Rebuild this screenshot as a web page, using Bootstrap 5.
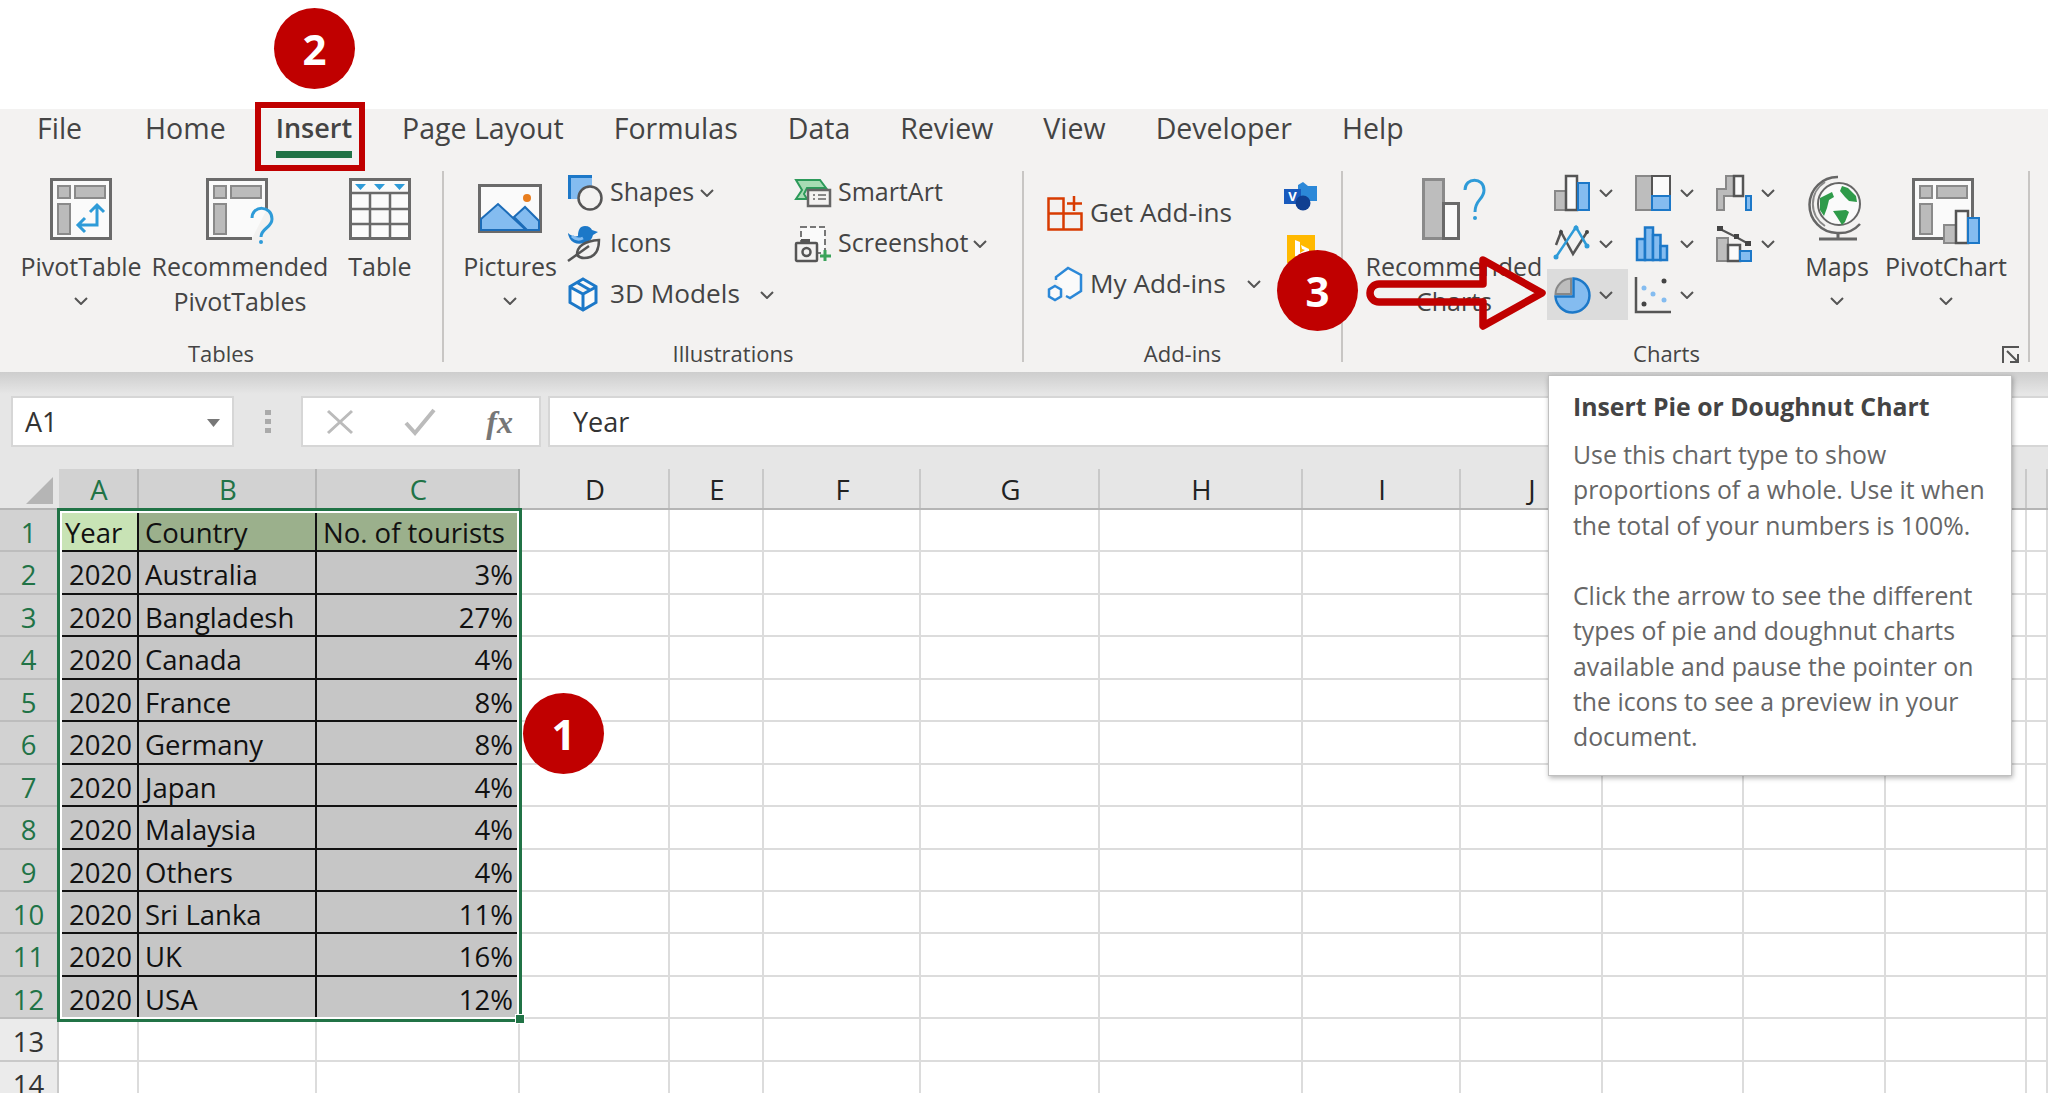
<!DOCTYPE html>
<html lang="en">
  <head>
    <meta charset="UTF-8" />
    <title>Insert Pie or Doughnut Chart</title>
    <link rel="stylesheet" href="https://cdn.jsdelivr.net/npm/bootstrap@5.3.0/dist/css/bootstrap.min.css" />
    <style>
      html, body { height: 100%; overflow: hidden; background: #fff; }
      body { font-family: "Open Sans", "Liberation Sans", sans-serif; color: #444; }
      svg { display: block; flex: none; overflow: visible; }
      .page-top { height: 109px; }

      /* ribbon */
      .ribbon { background: #f3f2f1; height: 263px; }
      .tab-row { height: 58px; padding-left: 37px; gap: 50px; font-size: 28.5px; }
      .tab-item { height: 49px; line-height: 38px; }
      .tab-item.first { margin-right: 13px; }
      .tab-on { font-size: 27px; font-weight: 600; border-bottom: 7px solid #217346; }
      .tool-row { height: 205px; font-size: 25px; line-height: 35px; }
      .txt-wide { font-size: 26.2px; }
      .rb-group { height: 205px; }
      .rb-body { flex: 1 1 auto; min-height: 0; }
      .rb-label { height: 34px; line-height: 31px; font-size: 22px; }
      .rb-sep { width: 2px; margin: 4px 0 10px; background: #c8c6c4; flex: none; }
      .big-btn { padding-top: 11px; }
      .big-icon { height: 62px; margin-bottom: 9px; }
      .chev-gap { margin-top: 13px; }
      .stack-row { height: 51px; }
      .stack-row span { padding-bottom: 2px; }
      .slot-icon { width: 43px; }
      .w-142 { width: 442px; }
      .w-illus { width: 578px; }
      .w-addin { width: 317px; }
      .w-chart { width: 685px; }
      .b-pivot { width: 138px; margin-left: 12px; }
      .b-recp { width: 178px; margin-left: 1px; }
      .b-table { width: 102px; }
      .b-pic { width: 110px; margin-left: 11px; margin-right: 2px; }
      .s-one { width: 228px; }
      .chev-shapes { margin-left: 6px; }
      .chev-models { margin-left: 20px; }
      .chev-shot { margin-left: 4px; }
      .addin-wrap { padding-left: 23px; padding-top: 10px; }
      .addin-left { width: 237px; }
      .addin-row { height: 71px; }
      .addin-icon { width: 43px; }
      .addin-right { padding-top: 5px; }
      .chev-addin { margin-left: 21px; }
      .b-recc { width: 186px; margin-left: 18px; }
      .chart-grid { width: 243px; display: grid; grid-template-columns: repeat(3, 81px); grid-auto-rows: 51px; }
      .chart-cell { padding-left: 7px; gap: 9px; }
      .chart-cell.on { background: #dcdcdc; }
      .b-maps { width: 94px; }
      .b-pchart { width: 124px; }
      .launch-gap { margin-right: 8px; }
      .label-pad { padding: 0 12px 3px 0; }

      /* formula bar */
      .fbar { height: 75px; padding-top: 24px; background: linear-gradient(#cdcdcd, #e6e6e6 22px); }
      .fbox { height: 51px; background: #fff; border: 2px solid #d6d6d6; }
      .f-name { width: 223px; margin-left: 11px; padding: 2px 12px 0; font-size: 27px; color: #333; }
      .f-dots { width: 67px; }
      .f-btns { width: 240px; padding: 0 26px 0 24px; }
      .f-x { font-family: "Liberation Serif", serif; font-style: italic; font-size: 32px; font-weight: 700; color: #777; line-height: 1; }
      .f-input { margin-left: 7px; padding: 2px 0 0 23px; font-size: 27px; color: #333; border-right: 0; }

      /* sheet */
      .sheet { display: grid; background: #fff; font-size: 27.5px;
        grid-template-columns: 59px 80px 178px 203px 150px 94px 157px 179px 203px 158px 142px 141px 142px 141px 21px;
        grid-template-rows: 63px repeat(14, 42.45px); }
      .corner { background: #e6e6e6; border-bottom: 2px solid #b5b5b5; }
      .corner svg { margin: 30px 0 0 26px; }
      .col-h { background: #e6e6e6; color: #222; line-height: 41px; padding-top: 22px;
        text-align: center; border-bottom: 2px solid #b5b5b5; position: relative; }
      .col-h::after { content: ""; position: absolute; right: 0; top: 22px; bottom: 0; width: 2px; background: #c9c9c9; }
      .col-h.sel { background: linear-gradient(#e6e6e6 22px, #d2d2d2 22px); color: #217346; }
      .col-h.sel::after { background: #b5b5b5; }
      .row-h { background: #ebebeb; color: #333; text-align: center; line-height: 45px; border-bottom: 2px solid #c9c9c9; border-right: 2px solid #c9c9c9; }
      .row-h.sel { background: #d2d2d2; color: #217346; border-color: #bdbdbd; }
      .cell-e { border-right: 2px solid #dcdcdc; border-bottom: 2px solid #dcdcdc; }
      .cell-d { background: #c6c6c6; color: #111; line-height: 45px; border-right: 2px solid #111; border-bottom: 2px solid #111; padding: 0 5px 0 6px; white-space: nowrap; overflow: hidden; }
      .cell-d.hd { background: #9bb08c; }
      .cell-d.hd1 { background: #c8e3b5; }
      .cell-d.num { text-align: right; }

      /* overlays */
      .sheet-wrap { position: relative; }
      .sel-box { position: absolute; left: 57px; top: 61px; width: 465px; height: 514px; border: 3px solid #217346; box-shadow: inset 0 0 0 2px #fff; }
      .sel-grip { position: absolute; left: 515px; top: 567px; width: 10px; height: 10px; background: #217346; border: 1px solid #fff; }
      .tip-box { position: absolute; left: 1548px; top: 375px; width: 464px; height: 401px; background: #fff; border: 1px solid #c0c0c0;
        box-shadow: 1px 2px 5px rgba(0, 0, 0, .3); padding: 13px 0 0 24px; white-space: nowrap; color: #666; font-size: 24.8px; line-height: 35.3px; }
      .tip-box h6 { font-size: 24.8px; font-weight: 700; color: #444; line-height: 35px; margin: 0 0 13px; }
      .step-dot { position: absolute; width: 81px; height: 81px; border-radius: 50%; background: #c00000; color: #fff; font-size: 42px; font-weight: 700;
        line-height: 81px; text-align: center; }
      .dot-2 { left: 274px; top: 8px; }
      .dot-3 { left: 1277px; top: 250px; }
      .dot-1 { left: 523px; top: 693px; }
      .red-box { position: absolute; left: 255px; top: 102px; width: 110px; height: 69px; border: 6px solid #c00000; }
      .red-arrow { position: absolute; left: 1360px; top: 250px; }
    </style>
  </head>
  <body>
    <svg width="0" height="0" class="position-absolute">
      <symbol id="chev" viewBox="0 0 14 8"><path d="M1 1l6 6 6-6" fill="none" stroke="#555" stroke-width="2" /></symbol>
    </svg>

    <div class="page-top"></div>

    <div class="ribbon">
      <div class="tab-row d-flex align-items-start text-nowrap">
        <div class="tab-item first">File</div>
        <div class="tab-item">Home</div>
        <div class="tab-item tab-on">Insert</div>
        <div class="tab-item">Page Layout</div>
        <div class="tab-item">Formulas</div>
        <div class="tab-item">Data</div>
        <div class="tab-item">Review</div>
        <div class="tab-item">View</div>
        <div class="tab-item">Developer</div>
        <div class="tab-item">Help</div>
      </div>

      <div class="tool-row d-flex text-nowrap">
        <!-- Tables -->
        <div class="rb-group w-142 d-flex flex-column">
          <div class="rb-body d-flex">
            <div class="big-btn b-pivot d-flex flex-column align-items-center">
              <div class="big-icon">
                <svg width="62" height="62" viewBox="0 0 62 62">
                  <rect x="1.5" y="1.5" width="59" height="59" fill="#fafafa" stroke="#6a6a6a" stroke-width="3" />
                  <rect x="8" y="8" width="12" height="12" fill="#bbb" stroke="#8a8a8a" stroke-width="2" />
                  <rect x="25" y="8" width="30" height="12" fill="#bbb" stroke="#8a8a8a" stroke-width="2" />
                  <rect x="8" y="26" width="12" height="30" fill="#bbb" stroke="#8a8a8a" stroke-width="2" />
                  <path d="M29 47h18V27M35 40l-7 7 7 7M40 34l7-7 7 7" fill="none" stroke="#2e9bd8" stroke-width="3" />
                </svg>
              </div>
              <div>PivotTable</div>
              <svg width="14" height="8" class="chev-gap"><use href="#chev" /></svg>
            </div>
            <div class="big-btn b-recp d-flex flex-column align-items-center">
              <div class="big-icon">
                <svg width="68" height="62" viewBox="0 0 68 62">
                  <path d="M46 60.5H1.5v-59h59V32" fill="#fafafa" stroke="#6a6a6a" stroke-width="3" />
                  <rect x="8" y="8" width="12" height="12" fill="#bbb" stroke="#8a8a8a" stroke-width="2" />
                  <rect x="25" y="8" width="30" height="12" fill="#bbb" stroke="#8a8a8a" stroke-width="2" />
                  <rect x="8" y="26" width="12" height="30" fill="#bbb" stroke="#8a8a8a" stroke-width="2" />
                  <path d="M46 40c0-13 20-13 20 1 0 9-11 9-11 18" fill="none" stroke="#2e9bd8" stroke-width="3" />
                  <circle cx="55" cy="64" r="2" fill="#2e9bd8" />
                </svg>
              </div>
              <div class="text-center">Recommended<br />PivotTables</div>
            </div>
            <div class="big-btn b-table d-flex flex-column align-items-center">
              <div class="big-icon">
                <svg width="62" height="62" viewBox="0 0 62 62">
                  <rect x="1.5" y="1.5" width="59" height="59" fill="#fafafa" stroke="#6a6a6a" stroke-width="3" />
                  <path d="M2 15h58M2 31h58M2 46h58M21 15v46M41 15v46" stroke="#6a6a6a" stroke-width="2.5" fill="none" />
                  <path d="M6 6h11l-5.5 6zM25 6h11l-5.5 6zM45 6h11l-5.5 6z" fill="#2e9bd8" />
                </svg>
              </div>
              <div>Table</div>
            </div>
          </div>
          <div class="rb-label text-center">Tables</div>
        </div>
        <div class="rb-sep"></div>

        <!-- Illustrations -->
        <div class="rb-group w-illus d-flex flex-column">
          <div class="rb-body d-flex">
            <div class="big-btn b-pic d-flex flex-column align-items-center">
              <div class="big-icon">
                <svg width="64" height="62" viewBox="0 0 64 62">
                  <rect x="1.5" y="7.5" width="61" height="46" fill="#fafafa" stroke="#6a6a6a" stroke-width="3" />
                  <path d="M3 41l17-15 28 26H3z" fill="#84bcf0" stroke="#1c6cb8" stroke-width="2" />
                  <path d="M36 39l11-10 14 14v9H49z" fill="#84bcf0" stroke="#1c6cb8" stroke-width="2" />
                  <circle cx="49" cy="20" r="4" fill="#e87d1e" />
                </svg>
              </div>
              <div>Pictures</div>
              <svg width="14" height="8" class="chev-gap"><use href="#chev" /></svg>
            </div>
            <div class="s-one">
              <div class="stack-row d-flex align-items-center">
                <div class="slot-icon">
                  <svg width="36" height="37" viewBox="0 0 36 37">
                    <rect x="1" y="1" width="24" height="24" fill="#84bcf0" />
                    <path d="M1 1h24v3H4v21H1z" fill="#1c78c8" />
                    <circle cx="23" cy="24" r="11.5" fill="#f3f2f1" stroke="#555" stroke-width="2.5" />
                  </svg>
                </div>
                <span>Shapes</span>
                <svg width="14" height="8" class="chev-shapes"><use href="#chev" /></svg>
              </div>
              <div class="stack-row d-flex align-items-center">
                <div class="slot-icon">
                  <svg width="33" height="37" viewBox="0 0 33 37">
                    <path d="M1 8c3 3 7 4 10 3 0-6 2-10 7-10 4 0 6 2 7 4l6 2-5 3c-1 4-3 6-6 7-7 3-14 2-17-3-1-2-2-4-2-6z" fill="#1c78c8" />
                    <path d="M5 11c3 3 7 4 11 2" stroke="#84bcf0" stroke-width="3" fill="none" />
                    <path d="M10 30c0-9 8-14 22-15 0 12-5 18-15 18-3 0-5-1-7-3z" fill="#f3f2f1" stroke="#555" stroke-width="2.5" />
                    <path d="M1 36l21-15" stroke="#555" stroke-width="2.5" />
                  </svg>
                </div>
                <span>Icons</span>
              </div>
              <div class="stack-row d-flex align-items-center">
                <div class="slot-icon">
                  <svg width="32" height="35" viewBox="0 0 32 35">
                    <path d="M16 2l13 7.5v16L16 33 3 25.5v-16zM3 10l13 7 13-7M16 17v16M10 5.5l13 7.5" fill="#fafafa" stroke="#1c78c8" stroke-width="3" />
                  </svg>
                </div>
                <span class="txt-wide">3D Models</span>
                <svg width="14" height="8" class="chev-models"><use href="#chev" /></svg>
              </div>
            </div>
            <div>
              <div class="stack-row d-flex align-items-center">
                <div class="slot-icon">
                  <svg width="36" height="28" viewBox="0 0 36 28">
                    <path d="M1 1h24l6 8H12l-3 6 3 5H1l6-9z" fill="#a8dcb4" stroke="#2c9a5a" stroke-width="2" />
                    <rect x="13" y="11" width="22" height="16" fill="#f3f2f1" stroke="#666" stroke-width="2.5" />
                    <path d="M18 16h2M23 16h8M18 20h2M23 20h8" stroke="#888" stroke-width="2" />
                  </svg>
                </div>
                <span>SmartArt</span>
              </div>
              <div class="stack-row d-flex align-items-center">
                <div class="slot-icon">
                  <svg width="36" height="36" viewBox="0 0 36 36">
                    <rect x="6" y="1" width="24" height="26" fill="#fafafa" stroke="#777" stroke-width="2" stroke-dasharray="6 3" />
                    <rect x="1" y="17" width="21" height="18" rx="1" fill="#f3f2f1" stroke="#555" stroke-width="2.5" />
                    <rect x="6" y="13" width="9" height="4" fill="#555" />
                    <circle cx="11.5" cy="26" r="4" fill="#f3f2f1" stroke="#555" stroke-width="2.5" />
                    <path d="M30 24v11M25 30h11" stroke="#3aa35a" stroke-width="3" />
                  </svg>
                </div>
                <span>Screenshot</span>
                <svg width="14" height="8" class="chev-shot"><use href="#chev" /></svg>
              </div>
            </div>
          </div>
          <div class="rb-label text-center">Illustrations</div>
        </div>
        <div class="rb-sep"></div>

        <!-- Add-ins -->
        <div class="rb-group w-addin d-flex flex-column">
          <div class="rb-body addin-wrap d-flex">
            <div class="addin-left">
              <div class="addin-row d-flex align-items-center">
                <div class="addin-icon">
                  <svg width="36" height="36" viewBox="0 0 36 36">
                    <path d="M1.5 3.5h15v15h18v16h-33zM1.5 18.5h15M16.5 18.5v16" fill="none" stroke="#d83b01" stroke-width="2.5" />
                    <path d="M27 1v15M20 8.5h15" stroke="#d83b01" stroke-width="2.5" />
                  </svg>
                </div>
                <span class="txt-wide">Get Add-ins</span>
              </div>
              <div class="addin-row d-flex align-items-center">
                <div class="addin-icon">
                  <svg width="36" height="36" viewBox="0 0 36 36">
                    <path d="M9 14V11L21 2l13 7v16l-11 7-4-2" fill="#fafafa" stroke="#2b88d8" stroke-width="2.5" />
                    <path d="M8 20l6 3.5v7L8 34l-6-3.5v-7z" fill="#fafafa" stroke="#2b88d8" stroke-width="2.5" />
                  </svg>
                </div>
                <span class="txt-wide">My Add-ins</span>
                <svg width="14" height="8" class="chev-addin"><use href="#chev" /></svg>
              </div>
            </div>
            <div class="addin-right d-flex flex-column align-items-center gap-4">
              <svg width="33" height="29" viewBox="0 0 33 29">
                <path d="M14 3l5-3 5 4h9v15H24l-5 3-5-3z" fill="#2b88d8" />
                <rect x="0" y="7" width="17" height="15" fill="#185abd" />
                <circle cx="19" cy="21" r="7.5" fill="#103f91" />
                <text x="8.5" y="19" font-size="13" font-weight="700" fill="#fff" text-anchor="middle">V</text>
              </svg>
              <svg width="28" height="28" viewBox="0 0 28 28">
                <rect width="28" height="28" fill="#ffb900" />
                <path d="M8 5l5 2v11l5-3-3-1-1-4 8 4v4l-9 6-5-3z" fill="#fff" />
              </svg>
            </div>
          </div>
          <div class="rb-label text-center">Add-ins</div>
        </div>
        <div class="rb-sep"></div>

        <!-- Charts -->
        <div class="rb-group w-chart d-flex flex-column">
          <div class="rb-body d-flex">
            <div class="big-btn b-recc d-flex flex-column align-items-center">
              <div class="big-icon">
                <svg width="64" height="62" viewBox="0 0 64 62">
                  <rect x="1.5" y="1.5" width="20" height="59" fill="#bdbdbd" stroke="#8a8a8a" stroke-width="3" />
                  <rect x="21.5" y="25.5" width="15" height="35" fill="#fafafa" stroke="#6a6a6a" stroke-width="3" />
                  <path d="M43 12c0-13 19-13 19 0 0 10-9 9-9 22" fill="none" stroke="#2e9bd8" stroke-width="3" />
                  <circle cx="53" cy="40" r="2" fill="#2e9bd8" />
                </svg>
              </div>
              <div class="text-center">Recommended<br />Charts</div>
            </div>
            <div class="chart-grid">
              <div class="chart-cell d-flex align-items-center">
                <svg width="36" height="36" viewBox="0 0 36 36">
                  <rect x="1" y="16" width="11" height="19" fill="#bdbdbd" stroke="#888" stroke-width="2" />
                  <rect x="12" y="1" width="11" height="34" fill="#fafafa" stroke="#555" stroke-width="2.5" />
                  <rect x="24" y="8" width="11" height="27" fill="#84bcf0" stroke="#1c78c8" stroke-width="2" />
                </svg>
                <svg width="14" height="8"><use href="#chev" /></svg>
              </div>
              <div class="chart-cell d-flex align-items-center">
                <svg width="36" height="36" viewBox="0 0 36 36">
                  <rect x="1" y="1" width="16" height="34" fill="#bdbdbd" stroke="#888" stroke-width="2" />
                  <rect x="17" y="1" width="18" height="20" fill="#fafafa" stroke="#555" stroke-width="2" />
                  <rect x="17" y="21" width="18" height="14" fill="#84bcf0" stroke="#1c78c8" stroke-width="2" />
                </svg>
                <svg width="14" height="8"><use href="#chev" /></svg>
              </div>
              <div class="chart-cell d-flex align-items-center">
                <svg width="36" height="36" viewBox="0 0 36 36">
                  <path d="M1 35V14h9V1h8v20H8v14z" fill="#bbb" stroke="#888" stroke-width="2" />
                  <rect x="18" y="1" width="9" height="20" fill="#fafafa" stroke="#555" stroke-width="2.5" />
                  <rect x="30" y="21" width="5" height="14" fill="#84bcf0" stroke="#1c78c8" stroke-width="2" />
                </svg>
                <svg width="14" height="8"><use href="#chev" /></svg>
              </div>
              <div class="chart-cell d-flex align-items-center">
                <svg width="36" height="36" viewBox="0 0 36 36">
                  <path d="M2 19L7 6l12 22L33 6" fill="none" stroke="#555" stroke-width="2.5" />
                  <path d="M2 31L22 1l11 19" fill="none" stroke="#2e9bd8" stroke-width="2.5" />
                  <circle cx="2" cy="31" r="2.5" fill="#2e9bd8" /><circle cx="33" cy="20" r="2.5" fill="#2e9bd8" /><circle cx="22" cy="2" r="2.5" fill="#2e9bd8" />
                  <circle cx="7" cy="6" r="2" fill="#444" /><circle cx="33" cy="6" r="2" fill="#444" />
                </svg>
                <svg width="14" height="8"><use href="#chev" /></svg>
              </div>
              <div class="chart-cell d-flex align-items-center">
                <svg width="36" height="36" viewBox="0 0 36 36">
                  <rect x="2" y="13" width="8" height="21" fill="#84bcf0" stroke="#1c78c8" stroke-width="2.5" />
                  <rect x="10" y="1.5" width="8" height="32.5" fill="#84bcf0" stroke="#1c78c8" stroke-width="2.5" />
                  <rect x="18" y="9" width="7.5" height="25" fill="#84bcf0" stroke="#1c78c8" stroke-width="2.5" />
                  <rect x="25.5" y="20" width="6.5" height="14" fill="#84bcf0" stroke="#1c78c8" stroke-width="2.5" />
                </svg>
                <svg width="14" height="8"><use href="#chev" /></svg>
              </div>
              <div class="chart-cell d-flex align-items-center">
                <svg width="36" height="36" viewBox="0 0 36 36">
                  <rect x="1" y="12" width="11" height="23" fill="#bdbdbd" stroke="#888" stroke-width="2" />
                  <rect x="12" y="19" width="12" height="16" fill="#fafafa" stroke="#555" stroke-width="2.5" />
                  <rect x="24" y="25" width="11" height="10" fill="#84bcf0" stroke="#1c78c8" stroke-width="2" />
                  <path d="M4 3l16 8 11 6" fill="none" stroke="#555" stroke-width="2" />
                  <rect x="1" y="0" width="6" height="5" fill="#444" /><rect x="18" y="8" width="5" height="5" fill="#444" /><rect x="29" y="15" width="6" height="5" fill="#444" />
                </svg>
                <svg width="14" height="8"><use href="#chev" /></svg>
              </div>
              <div class="chart-cell on d-flex align-items-center">
                <svg width="36" height="36" viewBox="0 0 36 36">
                  <path d="M19.5 1.5A17 17 0 1 1 1.5 19.5h18z" fill="#84bcf0" stroke="#1c78c8" stroke-width="2.5" />
                  <path d="M1.5 17A16 16 0 0 1 17 1.5V17z" fill="#bdbdbd" stroke="#888" stroke-width="2" />
                </svg>
                <svg width="14" height="8"><use href="#chev" /></svg>
              </div>
              <div class="chart-cell d-flex align-items-center">
                <svg width="36" height="36" viewBox="0 0 36 36">
                  <path d="M1 0v35h35" fill="none" stroke="#555" stroke-width="2.5" />
                  <circle cx="9" cy="11" r="2.5" fill="#84bcf0" /><circle cx="18" cy="17" r="2.5" fill="#84bcf0" /><circle cx="29" cy="23" r="2.5" fill="#84bcf0" />
                  <circle cx="29" cy="4" r="2.5" fill="#444" /><circle cx="9" cy="27" r="2.5" fill="#444" />
                </svg>
                <svg width="14" height="8"><use href="#chev" /></svg>
              </div>
            </div>
            <div class="big-btn b-maps d-flex flex-column align-items-center">
              <div class="big-icon">
                <svg width="52" height="62" viewBox="0 0 52 62">
                  <path d="M27 -1A28 28 0 0 0 26 55A28 28 0 0 0 49 46" fill="none" stroke="#666" stroke-width="2.5" />
                  <path d="M14 4A26 26 0 0 0 14 48" fill="none" stroke="#888" stroke-width="2" />
                  <circle cx="28" cy="26" r="21" fill="#fafafa" stroke="#666" stroke-width="2" />
                  <path d="M9 20l8-4 4-2 2 5-5 3-2 8-3 8-4-6zM31 8l6 2 8 8 1 6-8-1-4-4-5-6zM22 33l13-1 3 2-4 10-3 3-5-8z" fill="#2f9b4a" />
                  <path d="M27 54v7M8 61h38" stroke="#666" stroke-width="3" fill="none" />
                </svg>
              </div>
              <div>Maps</div>
              <svg width="14" height="8" class="chev-gap"><use href="#chev" /></svg>
            </div>
            <div class="big-btn b-pchart d-flex flex-column align-items-center">
              <div class="big-icon">
                <svg width="68" height="62" viewBox="0 0 68 62">
                  <path d="M31 60.5H1.5v-59h59V40" fill="#fafafa" stroke="#6a6a6a" stroke-width="3" />
                  <rect x="8" y="8" width="12" height="12" fill="#bbb" stroke="#8a8a8a" stroke-width="2" />
                  <rect x="25" y="8" width="30" height="12" fill="#bbb" stroke="#8a8a8a" stroke-width="2" />
                  <rect x="8" y="26" width="12" height="30" fill="#bbb" stroke="#8a8a8a" stroke-width="2" />
                  <rect x="32" y="47" width="12" height="18" fill="#bdbdbd" stroke="#8a8a8a" stroke-width="2" />
                  <rect x="44" y="33" width="12" height="32" fill="#fafafa" stroke="#555" stroke-width="2.5" />
                  <rect x="56" y="40" width="11" height="25" fill="#84bcf0" stroke="#1c78c8" stroke-width="2" />
                </svg>
              </div>
              <div>PivotChart</div>
              <svg width="14" height="8" class="chev-gap"><use href="#chev" /></svg>
            </div>
          </div>
          <div class="rb-label d-flex align-items-center">
            <span class="flex-fill text-center label-pad">Charts</span>
            <svg width="18" height="18" viewBox="0 0 18 18" class="launch-gap">
              <path d="M17 1H1v16" fill="none" stroke="#555" stroke-width="2" />
              <path d="M5 5l11 11M16 8v8H8" fill="none" stroke="#555" stroke-width="2" />
            </svg>
          </div>
        </div>
        <div class="rb-sep"></div>
      </div>
    </div>

    <!-- name box and formula bar -->
    <div class="fbar d-flex">
      <div class="fbox f-name d-flex align-items-center justify-content-between">
        <span>A1</span>
        <svg width="13" height="8" viewBox="0 0 13 8"><path d="M0 0h13L6.5 8z" fill="#777" /></svg>
      </div>
      <div class="f-dots d-flex justify-content-center align-items-center">
        <svg width="6" height="24" viewBox="0 0 6 24"><path d="M0 0h6v5H0zM0 9h6v5H0zM0 18h6v5H0z" fill="#aaa" /></svg>
      </div>
      <div class="fbox f-btns d-flex align-items-center justify-content-between">
        <svg width="26" height="24" viewBox="0 0 26 24"><path d="M1 1l24 22M25 1L1 23" stroke="#bbb" stroke-width="3" /></svg>
        <svg width="30" height="26" viewBox="0 0 30 26"><path d="M1 14l9 10L29 1" fill="none" stroke="#bbb" stroke-width="4" /></svg>
        <span class="f-x">fx</span>
      </div>
      <div class="fbox f-input flex-fill d-flex align-items-center">Year</div>
    </div>

    <!-- worksheet -->
    <div class="sheet-wrap">
      <div class="sheet" id="hoja"></div>
      <div class="sel-box"></div>
      <div class="sel-grip"></div>
    </div>

    <!-- annotations on top of the screenshot -->
    <div class="red-box"></div>
    <div class="step-dot dot-2">2</div>
    <div class="step-dot dot-3">3</div>
    <div class="step-dot dot-1">1</div>
    <svg class="red-arrow" width="190" height="84" viewBox="0 0 190 84">
      <path d="M123 10l59 33-59 33V52H19a9 9 0 0 1 0-18h104z" fill="none" stroke="#c00000" stroke-width="7.5" stroke-linejoin="round" />
    </svg>

    <div class="tip-box">
      <h6>Insert Pie or Doughnut Chart</h6>
      <div>Use this chart type to show<br />proportions of a whole. Use it when<br />the total of your numbers is 100%.<br /><br />Click the arrow to see the different<br />types of pie and doughnut charts<br />available and pause the pointer on<br />the icons to see a preview in your<br />document.</div>
    </div>

    <script src="https://cdn.jsdelivr.net/npm/bootstrap@5.3.0/dist/js/bootstrap.bundle.min.js"></script>
    <script>
      const datos = [
        ["Year", "Country", "No. of tourists"],
        [2020, "Australia", "3%"],
        [2020, "Bangladesh", "27%"],
        [2020, "Canada", "4%"],
        [2020, "France", "8%"],
        [2020, "Germany", "8%"],
        [2020, "Japan", "4%"],
        [2020, "Malaysia", "4%"],
        [2020, "Others", "4%"],
        [2020, "Sri Lanka", "11%"],
        [2020, "UK", "16%"],
        [2020, "USA", "12%"],
      ];
      const letras = "ABCDEFGHIJKLM".split("").concat([""]);
      let html = '<div class="corner"><svg width="27" height="27" viewBox="0 0 27 27"><path d="M27 0v27H0z" fill="#b5b5b5" /></svg></div>';
      letras.forEach((l, i) => {
        html += `<div class="col-h${i < 3 ? " sel" : ""}">${l}</div>`;
      });
      for (let r = 0; r < 14; r++) {
        const fila = datos[r];
        html += `<div class="row-h${fila ? " sel" : ""}">${r + 1}</div>`;
        for (let c = 0; c < 14; c++) {
          if (fila && c < 3) {
            let cls = "cell-d";
            if (r === 0) cls += c === 0 ? " hd1" : " hd";
            if (r > 0 && c !== 1) cls += " num";
            html += `<div class="${cls}">${fila[c]}</div>`;
          } else {
            html += '<div class="cell-e"></div>';
          }
        }
      }
      document.getElementById("hoja").innerHTML = html;
    </script>
  </body>
</html>
